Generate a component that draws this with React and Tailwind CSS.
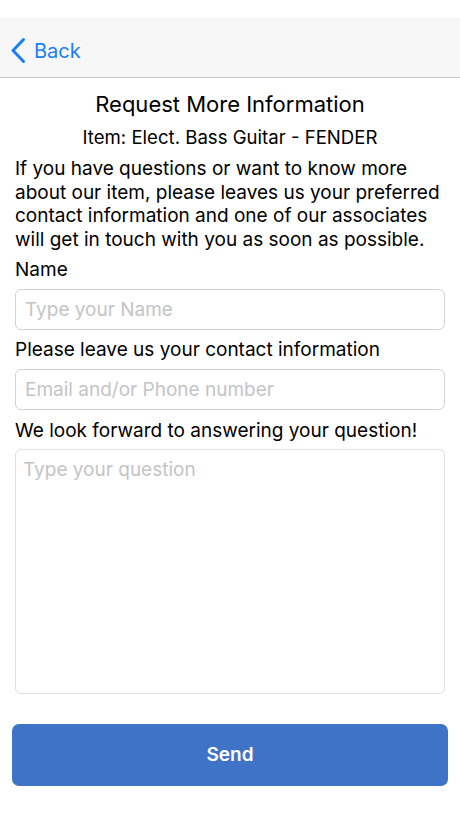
export default function App() {
  return (
    <div className="flex h-[818px] w-[460px] flex-col bg-white text-black font-['Inter',sans-serif]">
      <div className="h-[18px] bg-white" />
      <header className="flex h-[60px] items-center border-b border-[#c8c8cc] bg-[#f7f7f7] pl-[10px] pt-[6px]">
        <button type="button" className="flex items-center gap-[8px] text-[#1a7ef5]">
          <svg width="16" height="27" viewBox="0 0 16 27" fill="none">
            <path d="M13.5 2.5L3 13.5l10.5 11" stroke="#1a7ef5" strokeWidth="3" strokeLinecap="round" strokeLinejoin="round" />
          </svg>
          <span className="text-[20px] leading-none">Back</span>
        </button>
      </header>

      <main className="flex flex-1 flex-col px-[15px]">
        <h1 className="mt-[12px] text-center text-[22px] leading-[28px]">Request More Information</h1>
        <p className="mt-[8px] text-center text-[18.6px] leading-[22px]">Item: Elect. Bass Guitar - FENDER</p>
        <p className="mt-[9px] text-[19px] leading-[23.5px]">
          If you have questions or want to know more about our item, please leaves us your preferred contact
          information and one of our associates will get in touch with you as soon as possible.
        </p>

        <label className="mt-[7px] text-[19px] leading-[24px]">Name</label>
        <input
          type="text"
          placeholder="Type your Name"
          className="mt-[7px] h-[41px] w-full rounded-[6px] border border-[#d4d4d4] px-[9px] text-[19px] placeholder:text-[#c4c4c6] outline-none"
        />

        <label className="mt-[8px] text-[19px] leading-[24px]">Please leave us your contact information</label>
        <input
          type="text"
          placeholder="Email and/or Phone number"
          className="mt-[7px] h-[41px] w-full rounded-[6px] border border-[#d4d4d4] px-[9px] text-[19px] placeholder:text-[#c4c4c6] outline-none"
        />

        <label className="mt-[9px] text-[19px] leading-[24px]">We look forward to answering your question!</label>
        <textarea
          placeholder="Type your question"
          className="mt-[6px] h-[245px] w-full resize-none rounded-[6px] border border-[#e0e0e0] px-[7px] py-[8px] text-[19px] leading-[24px] placeholder:text-[#c4c4c6] outline-none"
        />

        <button
          type="button"
          className="mx-[-3px] mt-[30px] h-[62px] rounded-[7px] bg-[#3f73c8] text-[19px] font-semibold text-white"
        >
          Send
        </button>
      </main>
    </div>
  );
}
